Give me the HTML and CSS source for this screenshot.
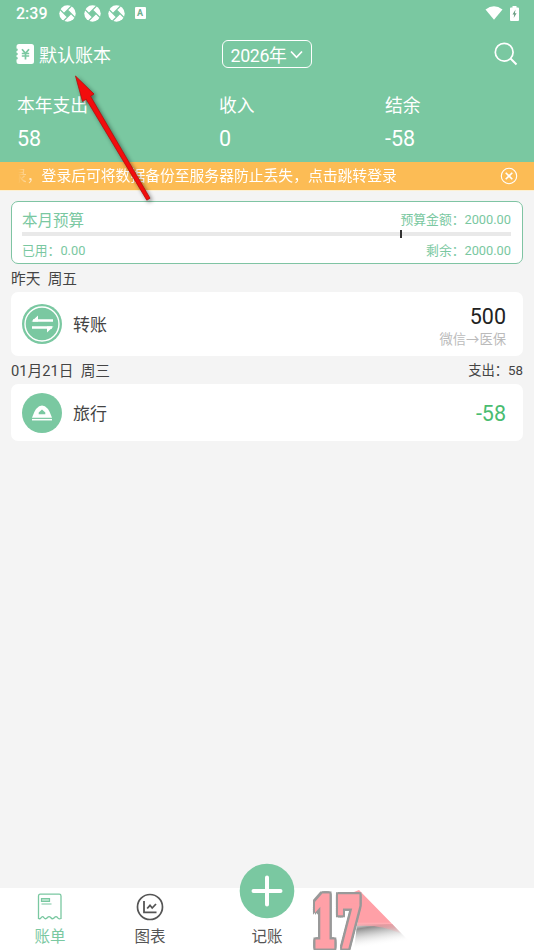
FILE: index.html
```
<!DOCTYPE html>
<html lang="zh-CN">
<head>
<meta charset="utf-8">
<title>账单</title>
<link rel="stylesheet" href="styles.css">
</head>
<body>
<div class="app">
  <header class="header">
    <div class="status">
      <span class="clock">2:39</span>
      <svg class="defs" width="0" height="0"><defs>
        <g id="shutter"><circle cx="8.500" cy="8.500" r="8.200" fill="#fff"/><path d="M8.500 5 12 8.500 8.500 12 5 8.500Z" fill="#7ac8a1"/><path d="M5 8.500 12.500 1M8.500 5 16 12.500M12 8.500 4.500 16M8.500 12 1 4.500" stroke="#7ac8a1" stroke-width="1.100"/></g>
      </defs></svg>
      <svg class="shutter" viewBox="0 0 17 17"><use href="#shutter"/></svg>
      <svg class="shutter" viewBox="0 0 17 17"><use href="#shutter"/></svg>
      <svg class="shutter" viewBox="0 0 17 17"><use href="#shutter"/></svg>
      <span class="abox">A</span>
      <svg class="wifi" width="18" height="14" viewBox="0 0 18 14"><path d="M.5 3.500Q9-3 17.500 3.500L9 13.800Z" fill="#fff"/></svg>
      <svg width="9" height="15" viewBox="0 0 9 15"><path d="M2.500 1.500V0h4v1.500H8q1 0 1 1V14q0 1-1 1H1q-1 0-1-1V2.500q0-1 1-1Z" fill="#fff"/><path d="M5.500 3.500 2.500 8.500H4.200L3.700 12 6.600 7.200H4.900Z" fill="#6a9d83"/></svg>
    </div>
    <div class="toolbar">
      <div class="book">
        <svg width="18" height="20" viewBox="0 0 18 20"><path d="M3 0H15.500Q18 0 18 2.500V17.500Q18 20 15.500 20H3Q.5 20 .5 17.500V15.500a1.300 1.300 0 0 0 0-2.600V11.300a1.300 1.300 0 0 0 0-2.600V7.100a1.300 1.300 0 0 0 0-2.600V2.500Q.5 0 3 0Z" fill="#fff"/><path d="M6 5.200 9.500 9.400 13 5.200M5.800 9.500h7.400M5.800 12h7.400M9.500 9.400v6" fill="none" stroke="#7ac8a1" stroke-width="1.700"/></svg>
        <span>默认账本</span>
      </div>
      <div class="year"><span>2026年</span><svg width="13" height="9" viewBox="0 0 13 9"><path d="M1 1.500 6.500 7.300 12 1.500" fill="none" stroke="#fff" stroke-width="1.700"/></svg></div>
      <svg class="search" width="24" height="24" viewBox="0 0 24 24"><circle cx="10.200" cy="10.200" r="8.900" fill="none" stroke="#fff" stroke-width="1.700"/><path d="m16.500 16.500 6 6" stroke="#fff" stroke-width="1.900"/></svg>
    </div>
    <div class="summary">
      <div><div class="label">本年支出</div><div class="value">58</div></div>
      <div><div class="label">收入</div><div class="value">0</div></div>
      <div><div class="label">结余</div><div class="value">-58</div></div>
    </div>
  </header>

  <div class="notice">
    <div class="marquee"><span>录，登录后可将数据备份至服务器防止丢失，点击跳转登录</span></div>
    <svg width="18" height="18" viewBox="0 0 18 18"><circle cx="9" cy="9" r="7.700" fill="none" stroke="#fff" stroke-width="1.100"/><path d="m5.700 5.700 6.600 6.600M12.300 5.700 5.700 12.300" stroke="#fff" stroke-width="1.600"/></svg>
  </div>

  <main class="content">
    <section class="budget">
      <div class="brow top"><span class="btitle">本月预算</span><span>预算金额：2000.00</span></div>
      <div class="bar"><i class="tick"></i></div>
      <div class="brow bottom"><span>已用：0.00</span><span>剩余：2000.00</span></div>
    </section>

    <div class="day"><span>昨天&nbsp; 周五</span></div>
    <section class="entry tall">
      <svg width="40" height="40" viewBox="0 0 40 40"><circle cx="20" cy="20" r="20" fill="#7ac8a1"/><circle cx="20" cy="20" r="17" fill="none" stroke="#fff" stroke-width="1.400"/><path d="M11 16.500H31M10 23.500H30" fill="none" stroke="#fff" stroke-width="2.300"/><path d="M16 11.500V17.600H9.500ZM25 22.400h6.500L25 28.500Z" fill="#fff"/></svg>
      <span class="name">转账</span>
      <div class="amount"><div class="num">500</div><div class="note">微信→医保</div></div>
    </section>

    <div class="day second"><span>01月21日&nbsp; 周三</span><span class="total">支出：58</span></div>
    <section class="entry short">
      <svg width="40" height="40" viewBox="0 0 40 40"><circle cx="20" cy="20" r="20" fill="#7ac8a1"/><path d="M10 24.700Q14 12.500 20 12.500T30 24.700Z" fill="#fff"/><path d="M16.700 21.300V19.500L20 16.600 23.300 19.500V21.300Z" fill="#7ac8a1"/><path d="M10 26.700H30" stroke="#fff" stroke-width="1.500"/></svg>
      <span class="name">旅行</span>
      <div class="amount green">-58</div>
    </section>
  </main>

  <nav class="nav">
    <div class="tab active">
      <svg width="26" height="28" viewBox="0 0 26 28"><path d="M1.500 25.500V3Q1.500 1.200 3.300 1.200H22.200Q24 1.200 24 3V25.500Q21.500 26.500 20.500 24.500 19 22.800 17.500 24.500 15.500 27 13.700 24.500 12 22.800 10.500 24.500 8.500 27 6.800 24.500 5.500 22.800 4 24.800 3 26.200 1.500 25.500Z" fill="none" stroke="currentColor" stroke-width="1.300"/><path d="M4.500 5.500h8v3h-8ZM4.500 11H14.500" fill="#b5e2cb" stroke="currentColor" stroke-width="1.200"/></svg>
      <span>账单</span>
    </div>
    <div class="tab chart">
      <svg width="28" height="28" viewBox="0 0 28 28"><circle cx="14" cy="14" r="12.500" fill="none" stroke="currentColor" stroke-width="1.700"/><path d="M8 8V19.300H20.500M11.200 15.500 14 12.300 16.200 15 20 11" fill="none" stroke="currentColor" stroke-width="1.800"/></svg>
      <span>图表</span>
    </div>
    <div class="tab add">
      <svg width="56" height="56" viewBox="0 0 56 56"><circle cx="28" cy="28" r="27.300" fill="#7ac8a1"/><path d="M14.500 28H41.500M28 14.500V41.500" stroke="#fff" stroke-width="4" stroke-linecap="round"/></svg>
      <span>记账</span>
    </div>
  </nav>

  <svg class="mark" width="110" height="62" viewBox="0 0 110 62">
    <defs>
      <linearGradient id="shade" x1="50" y1="34" x2="54" y2="60" gradientUnits="userSpaceOnUse"><stop offset="0" stop-color="#999" stop-opacity="0"/><stop offset=".25" stop-color="#8f8f8f"/><stop offset="1" stop-color="#fff" stop-opacity="0"/></linearGradient>
      <linearGradient id="ray" x1="60" y1="34" x2="60" y2="46" gradientUnits="userSpaceOnUse"><stop offset="0" stop-color="#ffa0a7"/><stop offset="1" stop-color="#ffa0a7" stop-opacity="0"/></linearGradient>
    </defs>
    <path d="M47 36H82L108 62H44Z" fill="url(#shade)"/>
    <path d="M49 2 92 46Q70 36 47 38L49 24 44 20V4Z" fill="url(#ray)"/>
    <text x="2" y="57.500" textLength="49" lengthAdjust="spacingAndGlyphs" class="digits">17</text>
  </svg>
  <svg class="arrow" width="90" height="138" viewBox="0 0 90 138"><path d="M5.500 4 24 22 20.500 24.200 80 126.200 76.800 128.200 16.200 27.200 12.500 29.500Z" fill="#f20d0d" stroke="#b80b0b" stroke-width=".8"/></svg>
</div>
</body>
</html>
```
FILE: styles.css
```
* { box-sizing: border-box; }
body { margin: 0; font-family: Roboto, "Noto Sans CJK SC", sans-serif; color: #444; }
svg { display: block; flex: none; }
.app { position: relative; width: 534px; height: 950px; background: #f4f4f4; display: flex; flex-direction: column; overflow: hidden; }

.header { height: 162px; background: #7ac8a1; color: #fff; }
.status { height: 28px; display: flex; align-items: center; padding: 0 15px 2px 16px; }
.clock { font-size: 16px; font-weight: 500; width: 43px; line-height: 26px; padding-top: 2px; }
.shutter { width: 17px; height: 17px; margin-right: 7.500px; }
.defs { position: absolute; }
.abox { width: 11px; height: 12px; margin-left: 2px; background: #fff; border-radius: 1px; color: #6caf8e; font-size: 9px; line-height: 12px; font-weight: 700; text-align: center; }
.wifi { margin-left: auto; margin-right: 7px; }

.toolbar { height: 52px; display: grid; grid-template-columns: 1fr auto 1fr; align-items: center; padding: 0 16px; }
.book { display: flex; align-items: center; gap: 5px; font-size: 18px; line-height: 26px; }
.book span { padding-top: 3px; }
.year { width: 90px; height: 28px; border: 1.500px solid #fff; border-radius: 6px; display: flex; align-items: center; justify-content: center; gap: 4px; font-size: 17.800px; line-height: 26px; letter-spacing: -.4px; padding-top: 1px; }
.year span { padding-top: 2px; }
.search { justify-self: end; }

.summary { display: grid; grid-template-columns: 202px 166px 1fr; padding: 12px 0 0 17px; }
.label { font-size: 17.800px; line-height: 28px; }
.value { font-size: 21.500px; line-height: 38px; }

.notice { height: 28px; background: #fcbc55; color: #fff; display: flex; align-items: center; justify-content: space-between; padding: 0 16px 0 18px; box-shadow: 0 1px 0 #fdf0d2; }
.marquee { width: 420px; overflow: hidden; display: flex; font-size: 14.800px; line-height: 28px; white-space: nowrap; -webkit-mask-image: linear-gradient(90deg, transparent, #000 18px); mask-image: linear-gradient(90deg, transparent, #000 18px); }
.marquee span { margin-left: -6px; }

.content { flex: 1; padding: 11px 11px 0; }
.budget { height: 63px; border: 1px solid #7fc4a3; border-radius: 7px; background: #fff; padding: 0 11px 0 10px; color: #7ac8a1; font-size: 12.800px; }
.brow { display: flex; justify-content: space-between; align-items: center; }
.top { height: 30px; padding-top: 3px; }
.btitle { font-size: 15.500px; }
.bottom { height: 25px; padding-top: 1px; }
.bar { height: 4px; background: #e9e9e9; position: relative; }
.tick { position: absolute; left: 378px; top: -2px; width: 2px; height: 8px; background: #333; }

.day { height: 29px; display: flex; align-items: center; justify-content: space-between; font-size: 14.700px; line-height: 28px; }
.second { height: 28px; padding-top: 2px; }
.total { font-size: 13.300px; }
.entry { background: #fff; border-radius: 7px; display: flex; align-items: center; padding: 0 17px 0 11px; }
.tall { height: 64px; margin-top: -1px; }
.short { height: 57px; }
.name { margin-left: 11px; padding-top: 2px; font-size: 17px; line-height: 28px; }
.amount { margin-left: auto; padding-top: 2px; text-align: right; font-size: 21.500px; }
.num { color: #222; line-height: 26px; padding-top: 3px; }
.note { color: #bbb; font-size: 13.300px; line-height: 20px; }
.green { color: #4abc70; }

.nav { height: 62px; background: #fff; display: flex; }
.tab { width: 100px; display: flex; flex-direction: column; align-items: center; padding-top: 5px; font-size: 15.500px; line-height: 24px; gap: 4px; color: #555; }
.active { color: #7ac8a1; }
.add { width: 134px; padding-top: 0; margin-top: -25px; gap: 6px; }

.mark { position: absolute; left: 310px; top: 888px; }
.digits { font-family: "DejaVu Serif", serif; font-weight: 700; font-size: 67px; fill: #ffa0a7; stroke: #ffa0a7; stroke-width: 5px; filter: drop-shadow(2px 0 0 #999) drop-shadow(-2px 0 0 #999) drop-shadow(0 2px 0 #999) drop-shadow(0 -2px 0 #999); }
.arrow { position: absolute; left: 70px; top: 72px; filter: drop-shadow(2px 2px 2px rgba(0,0,0,.45)); }
```
